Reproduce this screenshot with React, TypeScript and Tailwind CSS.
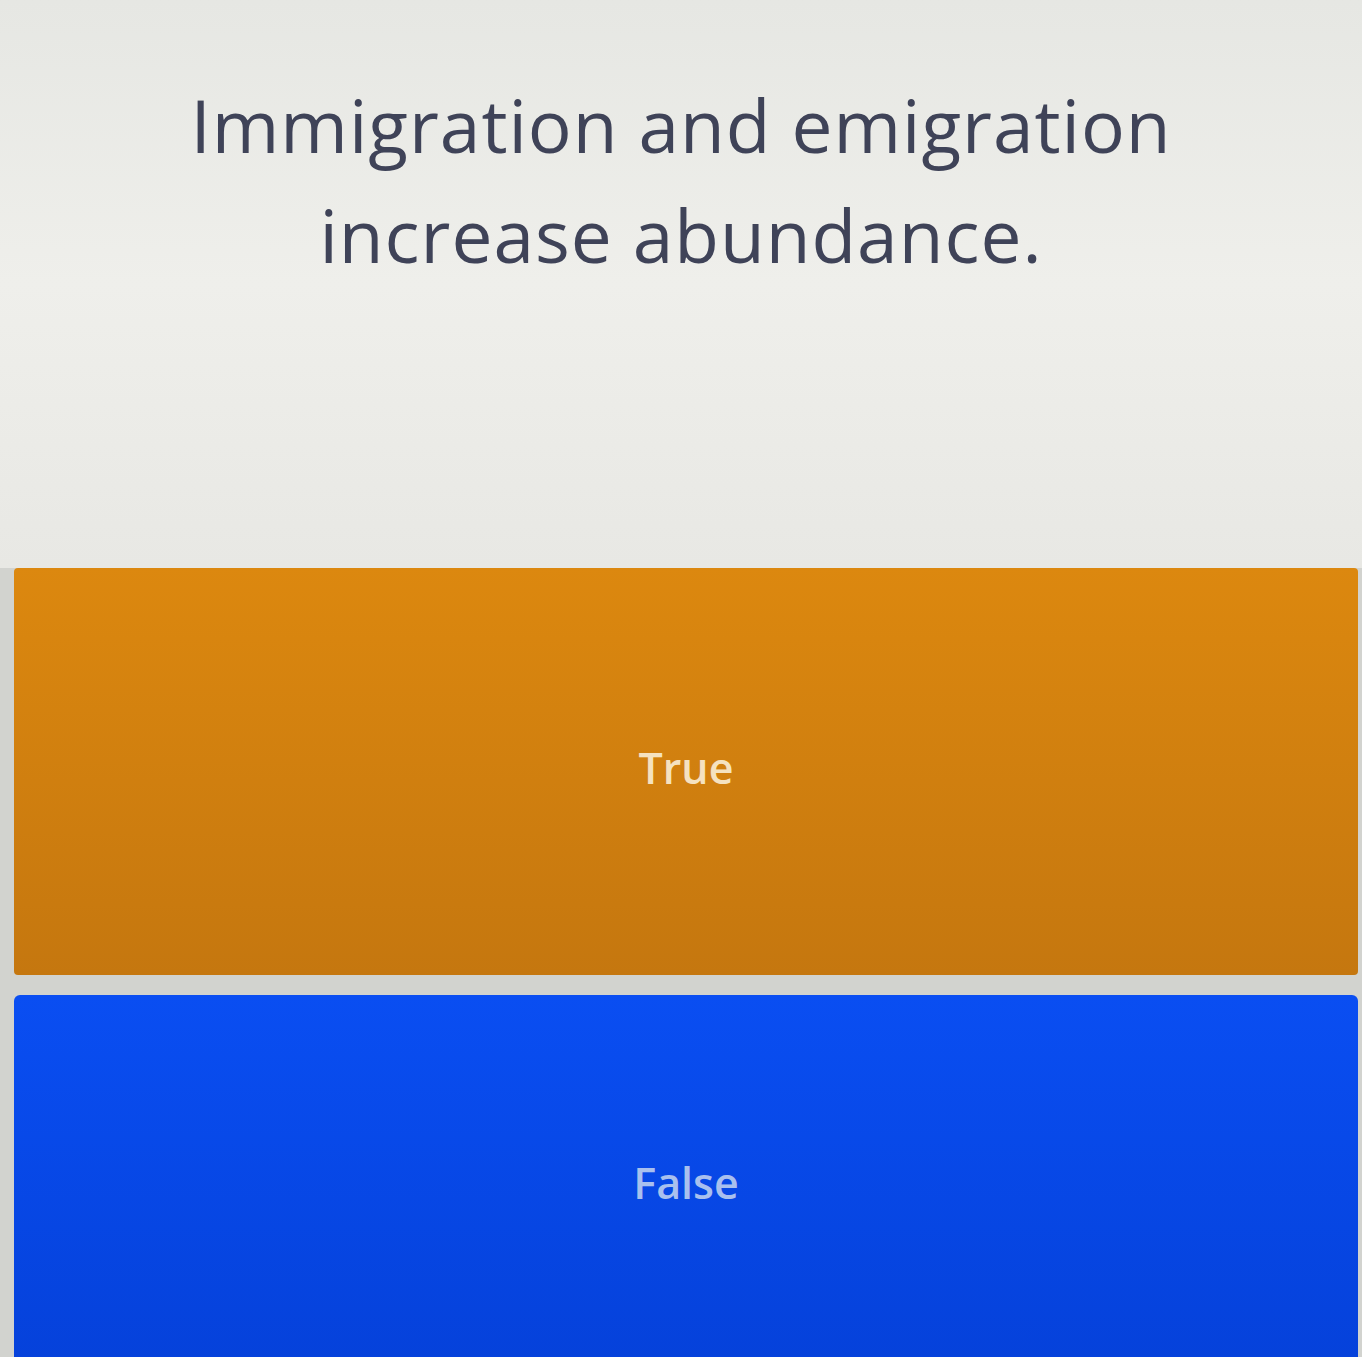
import React from 'react';

const App = () => {
  return (
    <div
      className="w-[1362px] h-[1357px] overflow-hidden flex flex-col bg-[#ebebe7]"
      style={{ fontFamily: '"Open Sans", "Noto Sans", sans-serif' }}
    >
      <div className="h-[568px] shrink-0 flex justify-center pt-[70px] bg-gradient-to-b from-[#e6e7e3] via-[#efefeb] to-[#e8e8e4]">
        <h1 className="text-[73px] leading-[110px] text-[#3f4358] text-center w-[1150px] tracking-[1px]">
          Immigration and emigration increase abundance.
        </h1>
      </div>
      <div className="flex-1 flex flex-col gap-[20px] pl-[14px] pr-[4px] bg-[#d2d3cf]">
        <button className="h-[407px] shrink-0 rounded-[4px] bg-gradient-to-b from-[#dc880f] to-[#c5770f] flex items-center justify-center pb-[6px] text-[43px] font-semibold text-[#f5e2c0]">
          True
        </button>
        <button className="h-[407px] shrink-0 rounded-[6px] bg-gradient-to-b from-[#0a4ef2] to-[#0540d8] flex items-center justify-center pb-[30px] text-[43px] font-semibold text-[#a9c0ee]">
          False
        </button>
      </div>
    </div>
  );
};

export default App;
